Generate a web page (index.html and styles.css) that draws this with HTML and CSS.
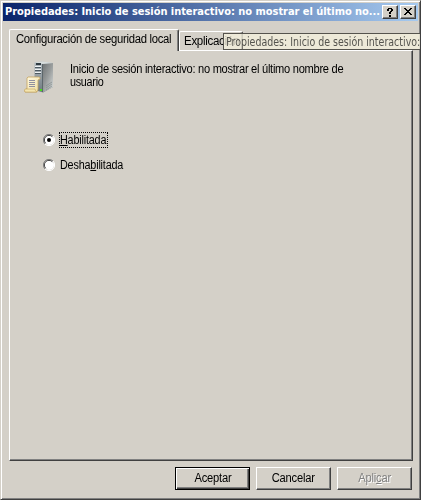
FILE: index.html
```html
<!DOCTYPE html>
<html lang="es">
<head>
<meta charset="utf-8">
<title>Propiedades</title>
<link rel="stylesheet" href="styles.css">
</head>
<body>
<main class="window">
  <header class="titlebar">
    <h1 class="title">Propiedades: Inicio de sesión interactivo: no mostrar el último no...</h1>
    <button class="caption help" aria-label="Ayuda"><svg width="8" height="9" viewBox="0 0 8 9" shape-rendering="crispEdges"><path d="M2 0h4v1H2zM1 1h2v2H1zM5 1h2v2H5zM4 3h2v1H4zM3 4h2v2H3zM3 7h2v2H3z"/></svg></button>
    <button class="caption" aria-label="Cerrar"><svg width="8" height="8" viewBox="0 0 8 8" shape-rendering="crispEdges"><path d="M0 0h2v1H0zM6 0h2v1H6zM1 1h2v1H1zM5 1h2v1H5zM2 2h4v1H2zM3 3h2v1H3zM2 4h4v1H2zM1 5h2v1H1zM5 5h2v1H5zM0 6h2v1H0zM6 6h2v1H6z"/></svg></button>
  </header>
  <nav class="tabs">
    <div class="tab active"><span class="narrow t-config">Configuración de seguridad local</span></div>
    <div class="tab"><span class="narrow t-expl">Explicación</span></div>
    <div class="tooltip"><span class="narrow t-tip">Propiedades: Inicio de sesión interactivo:</span></div>
  </nav>
  <section class="panel">
    <div class="policy">
      <svg class="server" width="32" height="34" viewBox="0 0 32 34">
        <defs>
          <linearGradient id="side" x1="0" y1="0" x2="1" y2="1"><stop offset="0" stop-color="#6c7071"/><stop offset=".5" stop-color="#999d9d"/><stop offset="1" stop-color="#dcdfdd"/></linearGradient>
          <linearGradient id="front" x1="0" y1="0" x2="0" y2="1"><stop offset="0" stop-color="#b4bcc2"/><stop offset="1" stop-color="#6f7a80"/></linearGradient>
          <linearGradient id="paper" x1="0" y1="0" x2="1" y2="1"><stop offset="0" stop-color="#fffbe6"/><stop offset="1" stop-color="#efdc9f"/></linearGradient>
        </defs>
        <path d="M10.500 1.500L18 .500L29 2V26L19 31.500L10.500 29z" fill="url(#front)"/>
        <path d="M18 2.500L29 2V26L19 31.500z" fill="url(#side)"/>
        <path d="M10.500 1.500L18.500 .500L29 2L18.500 3z" fill="#d7dddd"/>
        <path d="M12 2h5v2h-5z" fill="#303b42"/>
        <path d="M11 5h6v1h-6zM11 8h6v1h-6zM11 11h6v1h-6z" fill="#edf1f2"/>
        <path d="M11 6h6v1h-6zM11 9h6v1h-6zM11 12h6v1h-6z" fill="#4d5a62"/>
        <path d="M18.500 3V31" stroke="#5d676b"/>
        <path d="M22 27l6-4M22 29l6-4M22 25l6-4" stroke="#7f8989" stroke-width=".7"/>
        <path d="M4 16h11q1.500 0 1 2l-2 1v9q0 3-2 3H1q-1-2 1-3h1V17z" fill="url(#paper)" stroke="#c5a35d" stroke-width=".8"/>
        <path d="M1 28h10q0 2 2 3H1q-1-2 0-3z" fill="#f4e5af" stroke="#c5a35d" stroke-width=".6"/>
        <path d="M5 19.500h6M5 21.500h6M5 23.500h6M5 25.500h6" stroke="#85859a" stroke-width=".9"/>
        <path d="M16 28h2v2h-2z" fill="#45df19"/>
      </svg>
      <p class="description"><span class="narrow d-one">Inicio de sesión interactivo: no mostrar el último nombre de</span><br><span class="narrow d-two">usuario</span></p>
    </div>
    <div class="options">
      <label class="option"><svg width="12" height="12" viewBox="0 0 12 12"><circle cx="6" cy="6" r="5" fill="#fff"/><path d="M2 10A5.500 5.500 0 0 1 10 2" fill="none" stroke="#808080"/><path d="M2.700 9.300A4.600 4.600 0 0 1 9.300 2.700" fill="none" stroke="#404040"/><path d="M2 10A5.500 5.500 0 0 0 10 2" fill="none" stroke="#fff"/><circle cx="6" cy="6" r="2" fill="#000"/></svg><span class="option-text focus"><span class="narrow"><u>H</u>abilitada</span></span></label>
      <label class="option"><svg width="12" height="12" viewBox="0 0 12 12"><circle cx="6" cy="6" r="5" fill="#fff"/><path d="M2 10A5.500 5.500 0 0 1 10 2" fill="none" stroke="#808080"/><path d="M2.700 9.300A4.600 4.600 0 0 1 9.300 2.700" fill="none" stroke="#404040"/><path d="M2 10A5.500 5.500 0 0 0 10 2" fill="none" stroke="#fff"/></svg><span class="option-text"><span class="narrow">Desha<u>b</u>ilitada</span></span></label>
    </div>
  </section>
  <footer class="actions">
    <button class="button default"><span class="narrow">Aceptar</span></button>
    <button class="button"><span class="narrow">Cancelar</span></button>
    <button class="button disabled"><span class="narrow">Apli<u>c</u>ar</span></button>
  </footer>
</main>
</body>
</html>
```
FILE: styles.css
```css
* { box-sizing: border-box; }
body { margin: 0; background: #fff; overflow: hidden; font: 12px/13px "Liberation Sans", Arial, sans-serif; color: #000; }
.window {
  width: 421px; height: 500px; padding: 1px 1px 8px; background: #d4d0c8;
  border: 1px solid; border-color: #d4d0c8 #404040 #404040 #d4d0c8;
  box-shadow: inset 1px 1px #fff, inset -1px -1px #808080;
  display: flex; flex-direction: column; overflow: hidden;
}
.narrow { display: inline-block; transform-origin: 0 50%; transform: scaleX(.9); letter-spacing: -.2px; }
.titlebar {
  height: 18px; margin: 1px 1px 0; padding: 0 2px; display: flex; align-items: center;
  background: linear-gradient(90deg, #0a246a, #a6caf0);
}
.title { flex: 1; width: 0; margin: 0; color: #fff; white-space: nowrap; font: bold 11px/18px "DejaVu Sans Condensed", "DejaVu Sans", sans-serif; letter-spacing: -.04px; }
.caption {
  flex: none; width: 16px; height: 14px; padding: 0; background: #d4d0c8; display: flex; align-items: center; justify-content: center;
  border: 1px solid; border-color: #fff #404040 #404040 #fff; box-shadow: inset -1px -1px #808080;
}
.help { margin-right: 2px; }
.tabs { height: 29px; padding: 8px 0 0 7px; display: flex; align-items: flex-end; position: relative; }
.tab {
  height: 19px; width: 64px; padding: 3px 0 0 4px; white-space: nowrap;
  border: 1px solid #fff; border-bottom: 0; border-right-color: #404040; border-radius: 2px 2px 0 0;
  box-shadow: inset -1px 0 #808080;
}
.tab.active { width: 170px; height: 22px; margin-bottom: -1px; padding: 3px 0 0 6px; background: #d4d0c8; z-index: 1; }
.t-config { letter-spacing: -.3px; transform: scaleX(.94); }
.t-expl { letter-spacing: -.3px; transform: scaleX(.96); }
.tooltip {
  position: absolute; z-index: 2; left: 221px; top: 12px; width: 199px; height: 17px; padding: 1px 2px;
  border: 1px solid #55534d; border-right: 0; background: rgba(242, 239, 220, .8); color: #54534e; white-space: nowrap;
  font: 11.5px/14px "DejaVu Sans Condensed", "DejaVu Sans", sans-serif;
}
.t-tip { letter-spacing: 0; transform: scaleX(.915); }
.panel {
  height: 411px; width: 404px; margin-left: 7px; border: 1px solid; border-color: #fff #404040 #404040 #fff;
  box-shadow: inset -1px -1px #808080;
}
.policy { display: flex; padding: 11px 0 0 14px; gap: 14px; height: 81px; }
.server { margin-top: -1px; }
.description { margin: 1px 0 0; white-space: nowrap; }
.d-one { letter-spacing: -.3px; transform: scaleX(.925); }
.d-two { letter-spacing: -.3px; transform: scaleX(.9); }
.options { display: flex; flex-direction: column; gap: 9px; padding-left: 33px; }
.option { display: flex; align-items: center; gap: 4px; height: 16px; }
.option-text { padding: 0; border: 1px dotted transparent; height: 16px; line-height: 14px; white-space: nowrap; }
.focus { width: 49px; border-color: #000; }
.actions { display: flex; justify-content: flex-end; gap: 6px; padding: 6px 7px 0 0; }
.button {
  width: 75px; height: 23px; padding: 0 0 1px; background: #d4d0c8; font: inherit; color: #000;
  border: 1px solid; border-color: #fff #404040 #404040 #fff; box-shadow: inset -1px -1px #808080;
}
.button .narrow { transform-origin: 50% 50%; transform: scaleX(.93); }
.button.default { border-color: #000; box-shadow: inset 1px 1px #fff, inset -1px -1px #404040, inset -2px -2px #808080; }
.button.disabled { color: #808080; text-shadow: 1px 1px #fff; }
```
